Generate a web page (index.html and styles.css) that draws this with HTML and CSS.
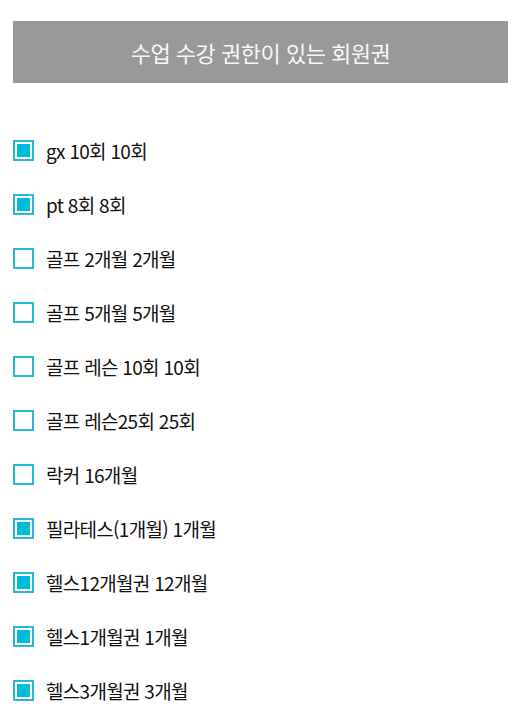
FILE: index.html
```html
<!DOCTYPE html>
<html lang="ko">
<head>
    <meta charset="UTF-8">
    <meta name="viewport" content="width=device-width, initial-scale=1.0">
    <title>회원권 선택</title>
    <link rel="stylesheet" href="styles.css">
</head>
<body>
    <div class="container">
        <header class="header">
            <h1>수업 수강 권한이 있는 회원권</h1>
        </header>

        <ul class="ticket-list">
            <li class="ticket"><span class="check checked"></span><span class="label">gx 10회 10회</span></li>
            <li class="ticket"><span class="check checked"></span><span class="label">pt 8회 8회</span></li>
            <li class="ticket"><span class="check"></span><span class="label">골프 2개월 2개월</span></li>
            <li class="ticket"><span class="check"></span><span class="label">골프 5개월 5개월</span></li>
            <li class="ticket"><span class="check"></span><span class="label">골프 레슨 10회 10회</span></li>
            <li class="ticket"><span class="check"></span><span class="label">골프 레슨25회 25회</span></li>
            <li class="ticket"><span class="check"></span><span class="label">락커 16개월</span></li>
            <li class="ticket"><span class="check checked"></span><span class="label">필라테스(1개월) 1개월</span></li>
            <li class="ticket"><span class="check checked"></span><span class="label">헬스12개월권 12개월</span></li>
            <li class="ticket"><span class="check checked"></span><span class="label">헬스1개월권 1개월</span></li>
            <li class="ticket"><span class="check checked"></span><span class="label">헬스3개월권 3개월</span></li>
        </ul>
    </div>
</body>
</html>
```

FILE: styles.css
```css
* {
    box-sizing: border-box;
    margin: 0;
    padding: 0;
}

body {
    font-family: 'Noto Sans CJK KR', 'Noto Sans', sans-serif;
    background: #ffffff;
    color: #111111;
}

.container {
    padding: 21px 17px 0 13px;
}

.header {
    background: #999999;
    height: 62px;
    display: flex;
    align-items: center;
    justify-content: center;
}

.header h1 {
    color: #f7f7f7;
    font-size: 22px;
    font-weight: 400;
    letter-spacing: -0.5px;
}

.ticket-list {
    list-style: none;
    padding-top: 40px;
}

.ticket {
    display: flex;
    align-items: center;
    gap: 12px;
    height: 54px;
}

.check {
    width: 21px;
    height: 21px;
    border: 2px solid #26b8d6;
    padding: 2px;
    flex-shrink: 0;
}

.check.checked::before {
    content: '';
    display: block;
    width: 100%;
    height: 100%;
    background: #00bcd8;
}

.label {
    font-size: 19px;
    letter-spacing: -0.7px;
}
```
